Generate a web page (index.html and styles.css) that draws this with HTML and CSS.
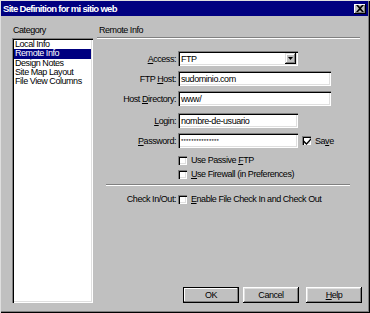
FILE: index.html
```html
<!DOCTYPE html>
<html lang="en">
<head>
    <meta charset="UTF-8">
    <title>Site Definition for mi sitio web</title>
    <link rel="stylesheet" href="styles.css">
</head>
<body>
    <div class="window">
        <div class="titlebar">
            <span class="title">Site Definition for mi sitio web</span>
            <span class="close">
                <svg width="8" height="7" viewBox="0 0 8 7"><path d="M0 0h2l2 2 2-2h2L5 3.5 8 7H6L4 5 2 7H0l3-3.5z" fill="#000"/></svg>
            </span>
        </div>
        <div class="content">
            <div class="category">
                <div class="caption">Category</div>
                <ul class="listbox">
                    <li>Local Info</li>
                    <li class="selected">Remote Info</li>
                    <li>Design Notes</li>
                    <li>Site Map Layout</li>
                    <li>File View Columns</li>
                </ul>
            </div>
            <div class="panel">
                <div class="caption panel-head">Remote Info</div>
                <div class="rule"></div>
                <div class="form">
                    <div class="row first">
                        <label class="label"><u>A</u>ccess:</label>
                        <div class="field select">
                            <span>FTP</span>
                            <span class="drop"><svg width="5" height="3" viewBox="0 0 5 3"><path d="M0 0h5L2.5 3z" fill="#000"/></svg></span>
                        </div>
                    </div>
                    <div class="row">
                        <label class="label">FTP <u>H</u>ost:</label>
                        <div class="field wide">sudominio.com</div>
                    </div>
                    <div class="row">
                        <label class="label">Host <u>D</u>irectory:</label>
                        <div class="field wide">www/</div>
                    </div>
                    <div class="row gap7">
                        <label class="label"><u>L</u>ogin:</label>
                        <div class="field">nombre-de-usuario</div>
                    </div>
                    <div class="row">
                        <label class="label"><u>P</u>assword:</label>
                        <div class="field password">***************</div>
                        <span class="check checked">
                            <svg width="7" height="7" viewBox="0 0 7 7"><path d="M0 2.5l2.5 2.5L7 0v2L2.5 7 0 4.5z" fill="#000"/></svg>
                        </span>
                        <span class="check-text">Sa<u>v</u>e</span>
                    </div>
                    <div class="row small gap7">
                        <span class="label"></span>
                        <span class="check"></span>
                        <span class="check-text">Use Passive <u>F</u>TP</span>
                    </div>
                    <div class="row small gap4">
                        <span class="label"></span>
                        <span class="check"></span>
                        <span class="check-text"><u>U</u>se Firewall (in Preferences)</span>
                    </div>
                    <div class="rule short"></div>
                    <div class="row small gap8">
                        <span class="label">Check In/Out:</span>
                        <span class="check"></span>
                        <span class="check-text"><u>E</u>nable File Check In and Check Out</span>
                    </div>
                </div>
                <div class="buttons">
                    <button class="btn default">OK</button>
                    <button class="btn">Cancel</button>
                    <button class="btn help"><u>H</u>elp</button>
                </div>
            </div>
        </div>
    </div>
</body>
</html>
```

FILE: styles.css
```css
body {
    margin: 0;
    font-family: 'Liberation Sans', Arial, sans-serif;
    font-size: 9px;
    letter-spacing: -0.45px;
    color: #000;
}
.window {
    width: 370px;
    height: 313px;
    box-sizing: border-box;
    padding: 1px 2px 2px 1px;
    background-color: #c0c0c0;
    box-shadow: inset 1px 1px #dfdfdf, inset -1px -1px #000, inset -2px -2px #808080;
    display: flex;
    flex-direction: column;
}
.titlebar {
    height: 15px;
    background-color: #000080;
    color: #fff;
    display: flex;
    align-items: center;
    justify-content: space-between;
    padding: 0 2px 0 2px;
}
.title {
    font-weight: bold;
    font-size: 9.5px;
    letter-spacing: -0.7px;
}
.close {
    width: 12px;
    height: 10px;
    background-color: #c0c0c0;
    box-shadow: inset -1px -1px #000, inset 1px 1px #fff, inset -2px -2px #808080;
    display: flex;
    align-items: center;
    justify-content: center;
}
.close svg {
    display: block;
}
.content {
    flex: 1;
    display: flex;
    padding: 0 0 8px 11px;
}
.category {
    width: 81px;
    display: flex;
    flex-direction: column;
}
.caption {
    height: 22px;
    box-sizing: border-box;
    padding: 9px 0 0 1px;
    line-height: 11px;
}
.listbox {
    flex: 1;
    margin: 0;
    padding: 2px 2px 2px 2px;
    list-style: none;
    background-color: #fff;
    box-shadow: inset 1px 1px #808080, inset 2px 2px #000, inset -1px -1px #fff, inset -2px -2px #dfdfdf;
}
.listbox li {
    height: 9.3px;
    line-height: 9.3px;
    padding-left: 1px;
    white-space: nowrap;
}
.listbox li.selected {
    background-color: #000080;
    color: #fff;
}
.panel {
    flex: 1;
    display: flex;
    flex-direction: column;
    padding-left: 4px;
    padding-right: 6px;
}
.panel-head {
    height: 21px;
    padding-left: 2px;
}
.rule {
    height: 1px;
    border-top: 1px solid #808080;
    background-color: #fff;
    margin-right: 2px;
}
.rule.short {
    margin: 5px 12px 0 9px;
}
.form {
    padding-top: 12px;
}
.row {
    display: flex;
    align-items: center;
    height: 15px;
    margin-top: 5px;
}
.row.first {
    margin-top: 0;
}
.row.gap7 {
    margin-top: 7px;
}
.row.gap4 {
    margin-top: 4px;
}
.row.gap8 {
    margin-top: 8px;
}
.row.small {
    height: 10px;
}
.label {
    width: 79px;
    margin-right: 2px;
    text-align: right;
    flex-shrink: 0;
}
.field {
    width: 120px;
    height: 15px;
    box-sizing: border-box;
    padding: 2px 3px 0 3px;
    line-height: 12px;
    background-color: #fff;
    box-shadow: inset 1px 1px #808080, inset 2px 2px #000, inset -1px -1px #fff, inset -2px -2px #dfdfdf;
    white-space: nowrap;
    overflow: hidden;
}
.field.wide {
    width: 153px;
}
.field.select {
    display: flex;
    justify-content: space-between;
    padding-right: 2px;
}
.field.password {
    font-size: 6px;
    letter-spacing: 0.2px;
}
.drop {
    width: 11px;
    height: 11px;
    background-color: #c0c0c0;
    box-shadow: inset -1px -1px #000, inset 1px 1px #dfdfdf, inset -2px -2px #808080, inset 2px 2px #fff;
    display: flex;
    align-items: center;
    justify-content: center;
}
.drop svg {
    display: block;
}
.check {
    width: 9px;
    height: 9px;
    box-sizing: border-box;
    background-color: #fff;
    box-shadow: inset 1px 1px #808080, inset 2px 2px #000, inset -1px -1px #fff, inset -2px -2px #dfdfdf;
    display: flex;
    align-items: center;
    justify-content: center;
    flex-shrink: 0;
}
.check svg {
    display: block;
    margin: 1px 0 0 1px;
}
.row > .field + .check {
    margin-left: 4px;
}
.check-text {
    margin-left: 4px;
    white-space: nowrap;
}
.buttons {
    margin-top: auto;
    display: flex;
    justify-content: flex-end;
    gap: 4px;
}
.btn {
    width: 56px;
    height: 16px;
    padding: 0;
    border: none;
    font: inherit;
    letter-spacing: inherit;
    background-color: #c0c0c0;
    box-shadow: inset -1px -1px #000, inset 1px 1px #fff, inset -2px -2px #808080, inset 2px 2px #dfdfdf;
}
.btn.default {
    box-shadow: inset 0 0 0 1px #000, inset -2px -2px #808080, inset 2px 2px #fff;
}
.btn.help {
    margin-left: 3px;
}
```
